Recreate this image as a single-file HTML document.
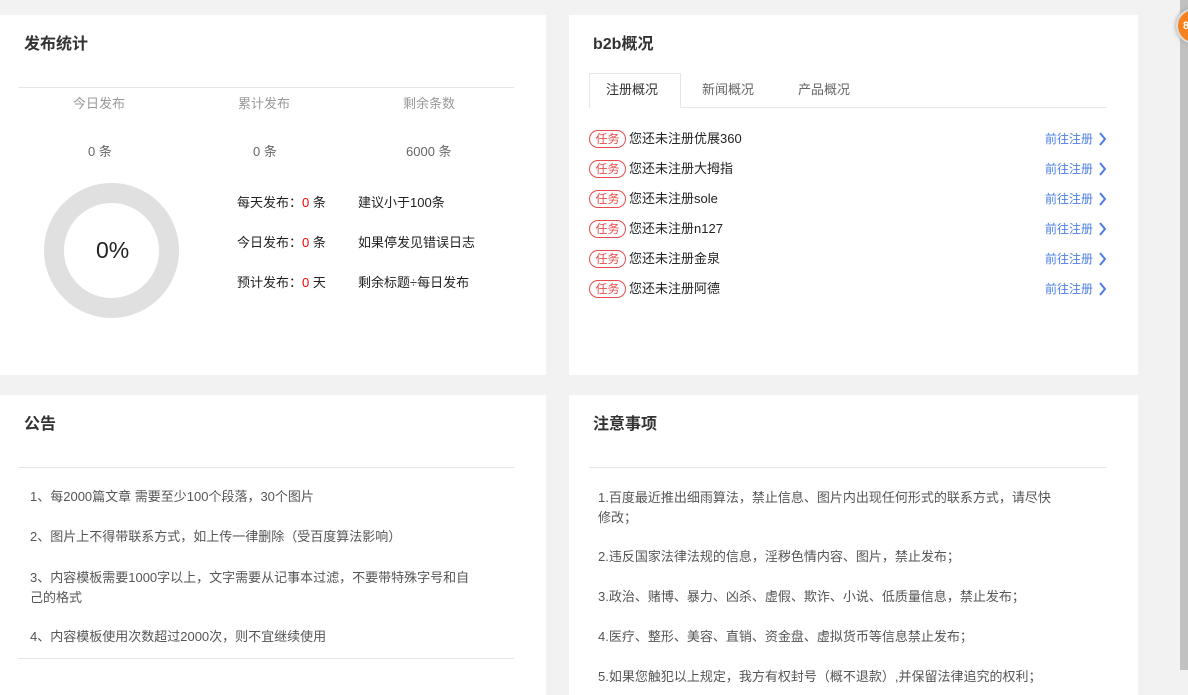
<!DOCTYPE html>
<html><head><meta charset="utf-8"><style>
*{margin:0;padding:0;box-sizing:border-box}
body{width:1188px;height:689px;overflow:hidden;background:#f2f2f2;font-family:"Liberation Sans","Noto Sans CJK SC",sans-serif;font-size:13px;color:#333;position:relative}
.card{position:absolute;background:#fff}
.t{position:absolute;font-size:16px;font-weight:bold;color:#333;line-height:20px}
.hr{position:absolute;height:1px;background:#e6e6e6}
.a{position:absolute;white-space:nowrap;line-height:18px}
.red{color:#f00}
.badge{position:absolute;width:37px;height:18px;border:1px solid #e84c4c;border-radius:9px;color:#e84c4c;font-size:12px;line-height:16px;text-align:center}
.lnk{position:absolute;color:#4a7ee6;font-size:12px;line-height:18px}
</style></head><body>
<div class="card" style="left:0;top:15px;width:546px;height:360px">
<div class="t" style="left:24px;top:20px">发布统计</div>
<div class="hr" style="left:18px;top:72px;width:496px"></div>
<div class="a" style="left:73px;top:80px;color:#999">今日发布</div>
<div class="a" style="left:238px;top:80px;color:#999">累计发布</div>
<div class="a" style="left:403px;top:80px;color:#999">剩余条数</div>
<div class="a" style="left:88px;top:128px;color:#666">0 条</div>
<div class="a" style="left:253px;top:128px;color:#666">0 条</div>
<div class="a" style="left:406px;top:128px;color:#666">6000 条</div>
<div style="position:absolute;left:44px;top:168px;width:135px;height:135px;border-radius:50%;border:20px solid #e0e0e0"></div>
<div class="a" style="left:96px;top:221px;font-size:23px;line-height:28px;color:#222">0%</div>
<div class="a" style="left:237px;top:179px;color:#222">每天发布：<span class="red">0</span> 条</div>
<div class="a" style="left:358px;top:179px;color:#222">建议小于100条</div>
<div class="a" style="left:237px;top:219px;color:#222">今日发布：<span class="red">0</span> 条</div>
<div class="a" style="left:358px;top:219px;color:#222">如果停发见错误日志</div>
<div class="a" style="left:237px;top:259px;color:#222">预计发布：<span class="red">0</span> 天</div>
<div class="a" style="left:358px;top:259px;color:#222">剩余标题÷每日发布</div>
</div>
<div class="card" style="left:569px;top:15px;width:569px;height:360px">
<div class="t" style="left:24px;top:20px">b2b概况</div>
<div class="hr" style="left:20px;top:92px;width:517px"></div>
<div style="position:absolute;left:20px;top:58px;width:92px;height:35px;border:1px solid #e6e6e6;border-bottom:none;background:#fff"></div>
<div class="a" style="left:37px;top:66px;color:#333">注册概况</div>
<div class="a" style="left:133px;top:66px;color:#666">新闻概况</div>
<div class="a" style="left:229px;top:66px;color:#666">产品概况</div>
<div class="badge" style="left:20px;top:115px">任务</div><div class="a" style="left:60px;top:115px;color:#222">您还未注册优展360</div><div class="lnk" style="left:476px;top:115px">前往注册</div>
<div class="badge" style="left:20px;top:145px">任务</div><div class="a" style="left:60px;top:145px;color:#222">您还未注册大拇指</div><div class="lnk" style="left:476px;top:145px">前往注册</div>
<div class="badge" style="left:20px;top:175px">任务</div><div class="a" style="left:60px;top:175px;color:#222">您还未注册sole</div><div class="lnk" style="left:476px;top:175px">前往注册</div>
<div class="badge" style="left:20px;top:205px">任务</div><div class="a" style="left:60px;top:205px;color:#222">您还未注册n127</div><div class="lnk" style="left:476px;top:205px">前往注册</div>
<div class="badge" style="left:20px;top:235px">任务</div><div class="a" style="left:60px;top:235px;color:#222">您还未注册金泉</div><div class="lnk" style="left:476px;top:235px">前往注册</div>
<div class="badge" style="left:20px;top:265px">任务</div><div class="a" style="left:60px;top:265px;color:#222">您还未注册阿德</div><div class="lnk" style="left:476px;top:265px">前往注册</div>
<svg style="position:absolute;left:529px;top:117px" width="10" height="170"><g fill="none" stroke="#4a7ee6" stroke-width="2"><path d="M2 1l5 6-5 6"/><path d="M2 31l5 6-5 6"/><path d="M2 61l5 6-5 6"/><path d="M2 91l5 6-5 6"/><path d="M2 121l5 6-5 6"/><path d="M2 151l5 6-5 6"/></g></svg>
</div>
<div class="card" style="left:0;top:395px;width:546px;height:300px;color:#555">
<div class="t" style="left:24px;top:20px">公告</div>
<div class="hr" style="left:18px;top:72px;width:496px"></div>
<div class="a" style="left:30px;top:93px">1、每2000篇文章 需要至少100个段落，30个图片</div>
<div class="a" style="left:30px;top:133px">2、图片上不得带联系方式，如上传一律删除（受百度算法影响）</div>
<div class="a" style="left:30px;top:173px;line-height:20px;white-space:normal;width:452px">3、内容模板需要1000字以上，文字需要从记事本过滤，不要带特殊字号和自己的格式</div>
<div class="a" style="left:30px;top:233px">4、内容模板使用次数超过2000次，则不宜继续使用</div>
<div class="hr" style="left:18px;top:263px;width:496px"></div>
</div>
<div class="card" style="left:569px;top:395px;width:569px;height:300px;color:#555">
<div class="t" style="left:24px;top:20px">注意事项</div>
<div class="hr" style="left:20px;top:72px;width:517px"></div>
<div class="a" style="left:29px;top:93px;line-height:20px;white-space:normal;width:464px">1.百度最近推出细雨算法，禁止信息、图片内出现任何形式的联系方式，请尽快修改；</div>
<div class="a" style="left:29px;top:153px">2.违反国家法律法规的信息，淫秽色情内容、图片，禁止发布；</div>
<div class="a" style="left:29px;top:193px">3.政治、赌博、暴力、凶杀、虚假、欺诈、小说、低质量信息，禁止发布；</div>
<div class="a" style="left:29px;top:233px">4.医疗、整形、美容、直销、资金盘、虚拟货币等信息禁止发布；</div>
<div class="a" style="left:29px;top:273px">5.如果您触犯以上规定，我方有权封号（概不退款）,并保留法律追究的权利；</div>
</div>
<div style="position:absolute;left:1180px;top:0;width:8px;height:670px;background:#c1c1c1"></div>
<div style="position:absolute;left:1176px;top:8px;width:36px;height:36px;border-radius:50%;background:#f5821f;border:2px solid #ddd;box-shadow:0 0 4px #999;color:#fff;font-size:11px;font-weight:bold;line-height:32px;padding-left:5px">8</div>
</body></html>
